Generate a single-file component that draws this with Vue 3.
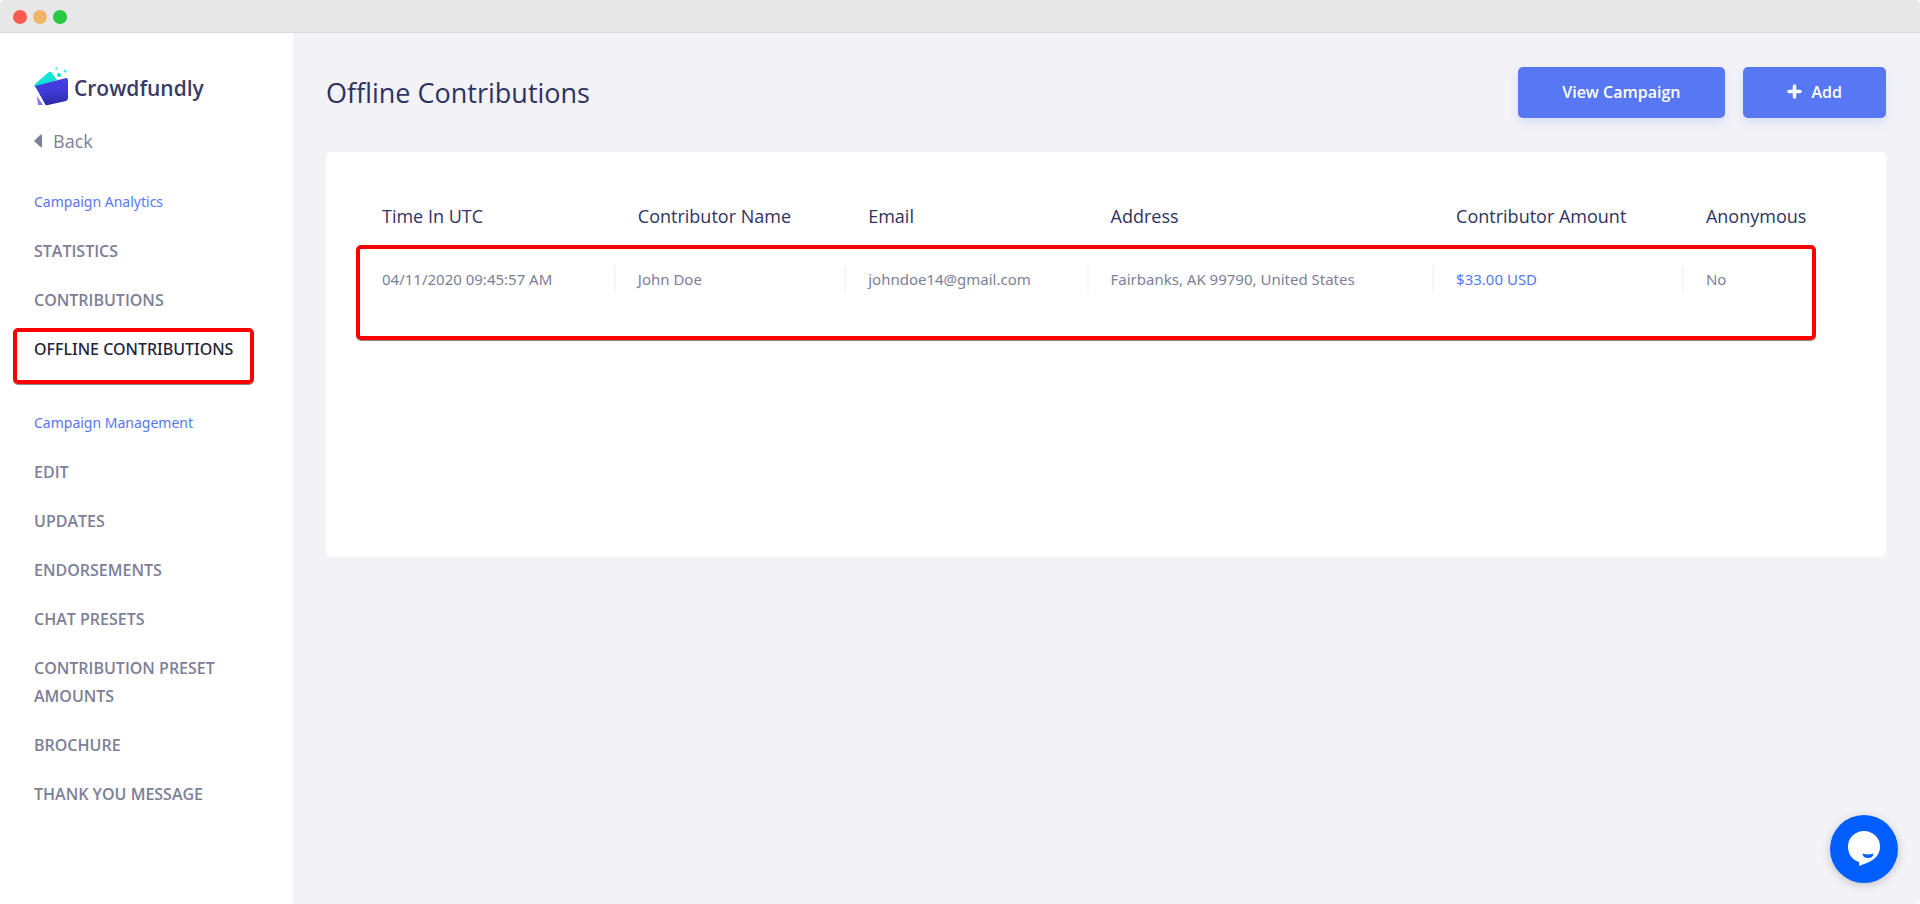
<script setup>
import { ref } from 'vue';

const menu = [
  {
    title: 'Campaign Analytics',
    items: ['Statistics', 'Contributions', 'Offline Contributions'],
  },
  {
    title: 'Campaign Management',
    items: [
      'Edit',
      'Updates',
      'Endorsements',
      'Chat Presets',
      'Contribution Preset Amounts',
      'Brochure',
      'Thank You Message',
    ],
  },
];

const active = ref('Offline Contributions');

const contributions = ref([
  {
    id: 1,
    time: '04/11/2020 09:45:57 AM',
    name: 'John Doe',
    email: 'johndoe14@gmail.com',
    address: 'Fairbanks, AK 99790, United States',
    amount: '$33.00 USD',
    anonymous: false,
  },
]);
</script>

<template>
  <div class="window">
    <div class="titlebar">
      <span class="dot red"></span>
      <span class="dot yellow"></span>
      <span class="dot green"></span>
    </div>

    <div class="layout">
      <aside class="sidebar">
        <a href="#" class="logo">
          <svg width="36" height="40" viewBox="0 0 36 40" aria-hidden="true">
            <defs>
              <linearGradient id="wallet" x1="0" y1="0" x2="0" y2="1">
                <stop offset="0" stop-color="#4640e6" />
                <stop offset="0.500" stop-color="#3f3ad6" />
                <stop offset="1" stop-color="#2b2aa0" />
              </linearGradient>
            </defs>
            <path d="M0 19 L1 17 L15 5 Q17 4 18 6 L23 13 L2 21 Z" fill="#12e5d8" />
            <path d="M3 29 L9 38 L4 38 Z" fill="#8a78f5" />
            <path d="M1 19 L32 11 Q34 11 34 13 L34 31 Q34 33 32 34 L14 38 Q12 39 11 37 Z" fill="url(#wallet)" />
            <circle cx="25" cy="8" r="2" fill="#12e5d8" />
            <circle cx="31" cy="4" r="1.500" fill="#4fe9df" />
            <circle cx="22.500" cy="1.500" r="1.500" fill="#7ff0e9" />
          </svg>
          <span>Crowdfundly</span>
        </a>

        <a href="#" class="back">
          <svg width="8" height="14" viewBox="0 0 8 14" aria-hidden="true">
            <path d="M8 1 V13 Q7 13.500 6 12.500 L0.500 7.500 Q0 7 0.500 6.500 L6 1 Q7 0 8 1 Z" fill="#7d819a" />
          </svg>
          Back
        </a>

        <nav v-for="group in menu" :key="group.title" class="menu">
          <h2>{{ group.title }}</h2>
          <ul>
            <li v-for="item in group.items" :key="item">
              <a href="#" :class="{ active: item === active }" @click.prevent="active = item">{{ item }}</a>
            </li>
          </ul>
        </nav>
      </aside>

      <main class="content">
        <header class="page-header">
          <h1>Offline Contributions</h1>
          <div class="actions">
            <button type="button" class="btn">View Campaign</button>
            <button type="button" class="btn">
              <svg width="15" height="15" viewBox="0 0 15 15" aria-hidden="true">
                <path d="M7.500 2 V13 M2 7.500 H13" stroke="#fff" stroke-width="3.500" stroke-linecap="round" />
              </svg>
              Add
            </button>
          </div>
        </header>

        <section class="card">
          <table>
            <colgroup>
              <col class="col-time" />
              <col class="col-name" />
              <col class="col-email" />
              <col class="col-address" />
              <col class="col-amount" />
              <col />
            </colgroup>
            <thead>
              <tr>
                <th>Time In UTC</th>
                <th>Contributor Name</th>
                <th>Email</th>
                <th>Address</th>
                <th>Contributor Amount</th>
                <th>Anonymous</th>
              </tr>
            </thead>
            <tbody>
              <tr v-for="row in contributions" :key="row.id">
                <td><div>{{ row.time }}</div></td>
                <td><div>{{ row.name }}</div></td>
                <td><div>{{ row.email }}</div></td>
                <td><div>{{ row.address }}</div></td>
                <td class="amount"><div>{{ row.amount }}</div></td>
                <td><div>{{ row.anonymous ? 'Yes' : 'No' }}</div></td>
              </tr>
            </tbody>
          </table>
          <div class="row-marker"></div>
        </section>
      </main>
    </div>

    <button type="button" class="chat" aria-label="Chat">
      <svg width="32" height="36" viewBox="0 0 32 36" aria-hidden="true">
        <path d="M16 0 A16 15.500 0 0 1 32 15.500 C32 25 26 30 11 35 L11 31 C4 29 0 23 0 15.500 A16 15.500 0 0 1 16 0 Z" fill="#fff" />
        <path d="M14.500 22.500 Q20 24.500 25.500 22.500 Q25 27 20 27 Q15 27 14.500 22.500 Z" fill="#005eff" />
      </svg>
    </button>
  </div>
</template>

<style>
body {
  margin: 0;
  background: #fff;
}
</style>

<style scoped>
.window {
  display: flex;
  flex-direction: column;
  min-height: 100vh;
  overflow: hidden;
  border-radius: 5px;
  background: #f2f2f7;
  color: #7d8096;
  font-family: 'Open Sans', 'Noto Sans', sans-serif;
  font-size: 16px;
}
.titlebar {
  display: flex;
  align-items: center;
  gap: 6px;
  box-sizing: border-box;
  height: 33px;
  padding: 2px 13px 0;
  background: #e8e8e8;
  border-bottom: 1px solid #d9d9df;
}
.dot {
  width: 14px;
  height: 14px;
  border-radius: 50%;
}
.red {
  background: #ff5a52;
}
.yellow {
  background: #f0b469;
}
.green {
  background: #29c941;
}
.layout {
  display: flex;
  flex: 1;
}
a {
  color: inherit;
  text-decoration: none;
}

/* Sidebar */
.sidebar {
  box-sizing: border-box;
  flex: 0 0 293px;
  padding: 34px 24px 34px 34px;
  background: #fff;
}
.logo {
  display: flex;
  align-items: center;
  gap: 4px;
  height: 40px;
  color: #3a3a66;
  font-size: 21px;
  font-weight: 600;
}
.logo span {
  padding-top: 2px;
}
.back {
  display: flex;
  align-items: center;
  gap: 11px;
  margin-top: 20px;
  font-size: 18px;
  line-height: 28px;
}
.menu {
  margin-top: 33px;
}
.menu + .menu {
  margin-top: 46px;
}
.menu h2 {
  margin: 0 0 21px;
  color: #5777f3;
  font-family: 'Noto Sans', 'Open Sans', sans-serif;
  font-size: 14px;
  font-weight: 400;
  line-height: 28px;
}
.menu ul {
  display: flex;
  flex-direction: column;
  gap: 21px;
  margin: 0;
  padding: 0;
  list-style: none;
}
.menu li {
  line-height: 28px;
}
.menu li a {
  position: relative;
  display: block;
  font-weight: 600;
  text-transform: uppercase;
}
.menu li .active {
  color: #24243a;
  font-family: 'Noto Sans', 'Open Sans', sans-serif;
  font-weight: 500;
}
.menu li .active::after {
  content: '';
  position: absolute;
  top: -7px;
  left: -21px;
  right: 15px;
  height: 48px;
  border: 4px solid #fa0000;
  border-radius: 5px;
  box-shadow: 0 1px 0 #8a8a8a;
}

/* Content */
.content {
  flex: 1;
  min-width: 0;
  padding: 34px 34px 34px 33px;
}
.page-header {
  display: flex;
  justify-content: space-between;
  align-items: center;
  margin-bottom: 34px;
}
h1 {
  margin: 0;
  color: #2f3361;
  font-size: 27px;
  font-weight: 400;
}
.actions {
  display: flex;
  gap: 18px;
}
.btn {
  display: flex;
  align-items: center;
  justify-content: center;
  gap: 10px;
  height: 51px;
  padding: 0 44px 2px;
  border: 0;
  border-radius: 5px;
  background: #5777f3;
  box-shadow: 0 5px 8px rgba(87, 119, 243, 0.15);
  color: #fff;
  font: inherit;
  font-weight: 600;
  cursor: pointer;
}
.card {
  position: relative;
  box-sizing: border-box;
  min-height: 405px;
  padding: 32px;
  border-radius: 5px;
  background: #fff;
}
table {
  width: 100%;
  table-layout: fixed;
  border-collapse: collapse;
}
.col-time {
  width: 17.1%;
}
.col-name {
  width: 15.4%;
}
.col-email {
  width: 16.2%;
}
.col-address {
  width: 23.1%;
}
.col-amount {
  width: 16.7%;
}
th,
td {
  padding: 0;
  text-align: left;
  white-space: nowrap;
}
th {
  height: 64px;
  padding-left: 24px;
  color: #2f3361;
  font-size: 18px;
  font-weight: 400;
}
td {
  height: 62px;
  font-family: 'Noto Sans', 'Open Sans', sans-serif;
  font-size: 15px;
}
td div {
  padding-left: 22px;
  border-left: 2px solid #f5f5fc;
  line-height: 27px;
}
td:first-child div {
  border-color: transparent;
}
.amount {
  color: #5777f3;
}
.row-marker {
  position: absolute;
  top: 93px;
  left: 30px;
  right: 70px;
  height: 87px;
  border: 4px solid #fa0000;
  border-radius: 5px;
  box-shadow: 0 1px 0 #8a8a8a;
}

.chat {
  position: fixed;
  right: 22px;
  bottom: 21px;
  display: flex;
  align-items: center;
  justify-content: center;
  width: 68px;
  height: 68px;
  padding: 0;
  border: 0;
  border-radius: 50%;
  background: #005eff;
  box-shadow: 0 2px 10px rgba(0, 0, 0, 0.2);
  cursor: pointer;
}
</style>
